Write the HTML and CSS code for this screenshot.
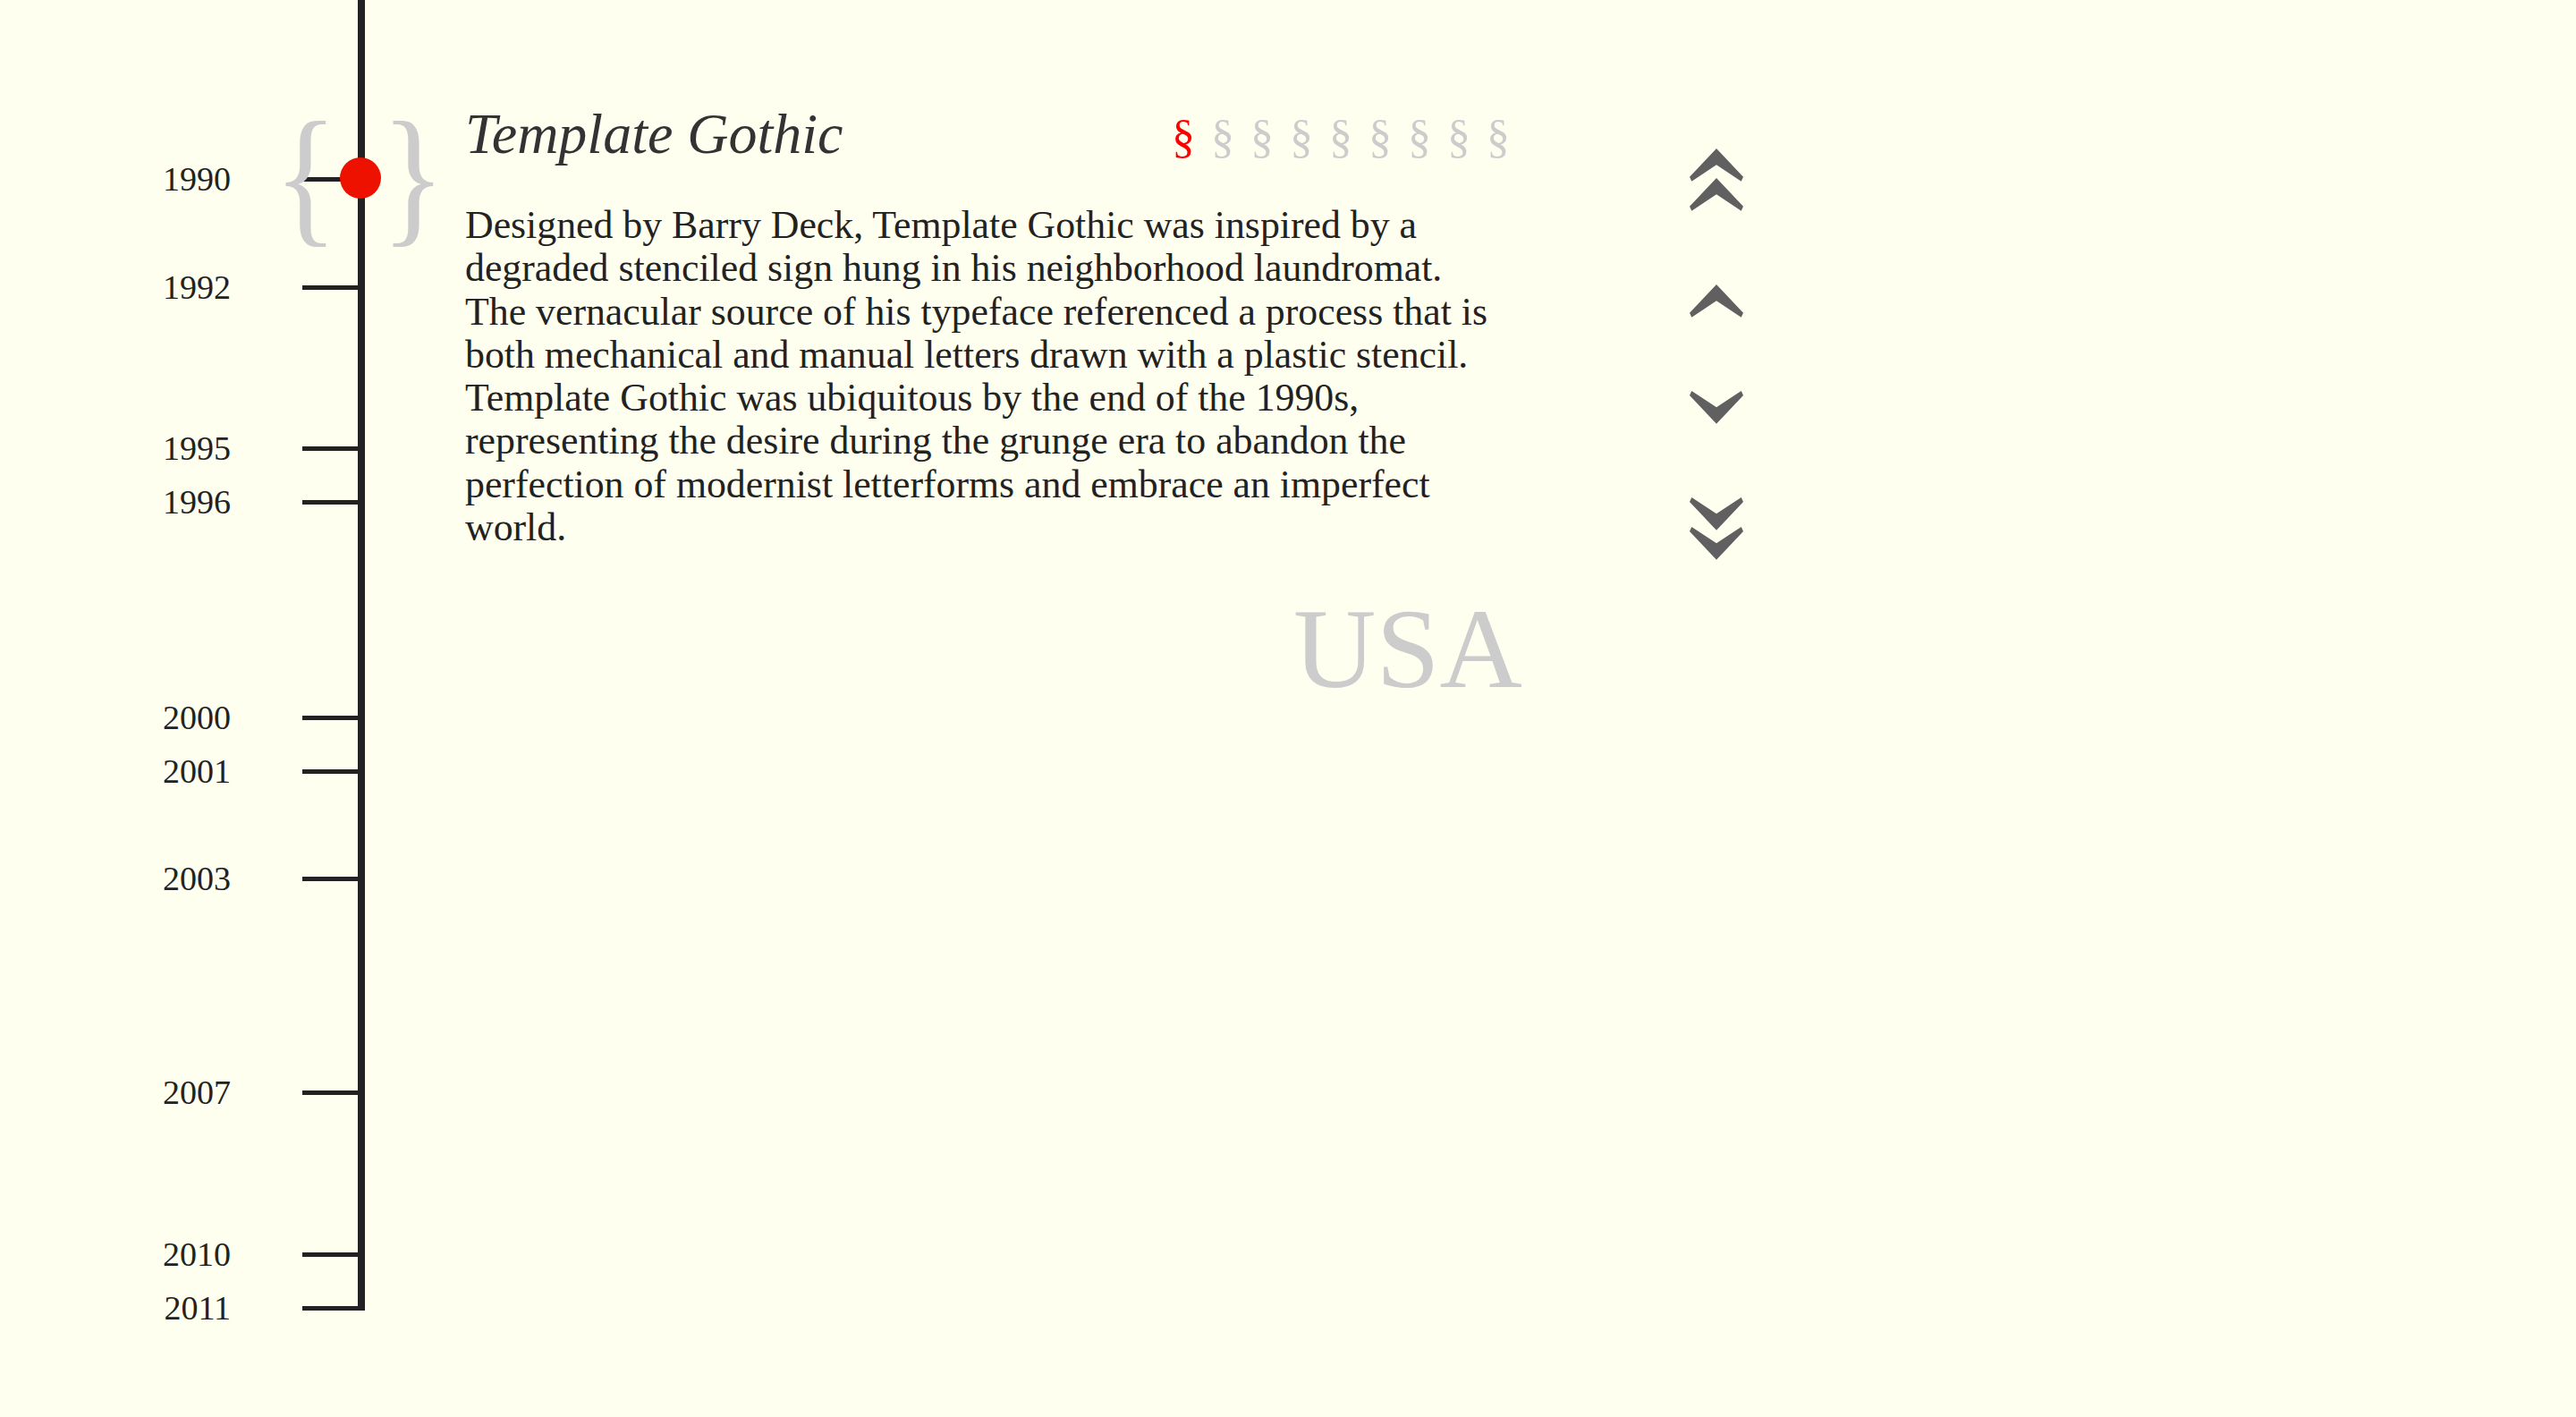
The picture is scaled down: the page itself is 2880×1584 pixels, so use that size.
FILE: index.html
```html
<!DOCTYPE html>
<html lang="en">
<head>
<meta charset="utf-8">
<title>Template Gothic — Timeline</title>
<link rel="stylesheet" href="styles.css">
</head>
<body>
<div class="page">
  <div class="timeline">
    <div class="axis"></div>
    <div class="mark" style="top:180px"><span class="year">1990</span><span class="tick"></span></div>
    <div class="mark" style="top:301px"><span class="year">1992</span><span class="tick"></span></div>
    <div class="mark" style="top:481px"><span class="year">1995</span><span class="tick"></span></div>
    <div class="mark" style="top:541px"><span class="year">1996</span><span class="tick"></span></div>
    <div class="mark" style="top:782px"><span class="year">2000</span><span class="tick"></span></div>
    <div class="mark" style="top:842px"><span class="year">2001</span><span class="tick"></span></div>
    <div class="mark" style="top:962px"><span class="year">2003</span><span class="tick"></span></div>
    <div class="mark" style="top:1201px"><span class="year">2007</span><span class="tick"></span></div>
    <div class="mark" style="top:1382px"><span class="year">2010</span><span class="tick"></span></div>
    <div class="mark" style="top:1442px"><span class="year">2011</span><span class="tick"></span></div>
    <div class="current" style="top:132px">
      <span class="brace">{</span>
      <span class="dot"></span>
      <span class="brace">}</span>
    </div>
  </div>

  <main class="entry">
    <header class="entry-head">
      <h1 class="entry-title">Template Gothic</h1>
      <nav class="sections">
        <span class="sec active">§</span>
        <span class="sec">§</span>
        <span class="sec">§</span>
        <span class="sec">§</span>
        <span class="sec">§</span>
        <span class="sec">§</span>
        <span class="sec">§</span>
        <span class="sec">§</span>
        <span class="sec">§</span>
      </nav>
    </header>
    <p class="entry-text">Designed by Barry Deck, Template Gothic was inspired by a degraded stenciled sign hung in his neighborhood laundromat. The vernacular source of his typeface referenced a process that is both mechanical and manual letters drawn with a plastic stencil. Template Gothic was ubiquitous by the end of the 1990s, representing the desire during the grunge era to abandon the perfection of modernist letterforms and embrace an imperfect world.</p>
    <div class="country">USA</div>
  </main>

  <nav class="pager">
    <a class="pg pg-double">
      <svg viewBox="0 0 60 70" width="60" height="70"><polygon points="30,0 60,31.7 57.7,36.7 30,18.3 2.3,36.7 0,31.7"/><polygon points="30,33 60,64.7 57.7,69.7 30,51.3 2.3,69.7 0,64.7"/></svg>
    </a>
    <a class="pg pg-single">
      <svg viewBox="0 0 60 37" width="60" height="37"><polygon points="30,0 60,31.7 57.7,36.7 30,18.3 2.3,36.7 0,31.7"/></svg>
    </a>
    <a class="pg pg-single">
      <svg viewBox="0 0 60 37" width="60" height="37"><polygon points="2.3,0 30,18.3 57.7,0 60,5 30,36.7 0,5"/></svg>
    </a>
    <a class="pg pg-double">
      <svg viewBox="0 0 60 70" width="60" height="70"><polygon points="2.3,0 30,18.3 57.7,0 60,5 30,36.7 0,5"/><polygon points="2.3,33 30,51.3 57.7,33 60,38 30,69.7 0,38"/></svg>
    </a>
  </nav>
</div>
</body>
</html>
```

FILE: styles.css
```css
html, body {
  margin: 0;
  padding: 0;
  background: #fffff0;
}

body {
  font-family: "Liberation Serif", "Times New Roman", serif;
  color: #222;
}

.page {
  display: flex;
  align-items: flex-start;
  width: 2880px;
  height: 1584px;
}

/* ---------- timeline ---------- */
.timeline {
  position: relative;
  width: 520px;
  height: 1584px;
  flex: none;
}

.axis {
  position: absolute;
  left: 400px;
  top: 0;
  width: 8px;
  height: 1465px;
  background: #222;
}

.mark {
  position: absolute;
  left: 0;
  height: 40px;
  display: flex;
  align-items: center;
}

.year {
  width: 258px;
  text-align: right;
  font-size: 38px;
  line-height: 40px;
  color: #222;
}

.tick {
  margin-left: 80px;
  width: 64px;
  height: 5px;
  background: #222;
}

.current {
  position: absolute;
  left: 319px;
  height: 144px;
  display: flex;
  align-items: flex-start;
  gap: 13px;
}

.brace {
  flex: none;
  width: 48px;
  text-align: center;
  font-size: 170px;
  line-height: 144px;
  color: #cccccc;
  display: block;
  margin-top: -8px;
  transform: translateX(-16px) scaleX(0.88);
}

.dot {
  flex: none;
  width: 46px;
  height: 46px;
  margin-top: 44px;
  border-radius: 50%;
  background: #ee1100;
}

/* ---------- entry ---------- */
.entry {
  width: 1182px;
  flex: none;
  padding-top: 116px;
}

.entry-head {
  display: flex;
  justify-content: space-between;
  align-items: flex-start;
  height: 68px;
}

.entry-title {
  margin: 0;
  font-size: 64px;
  line-height: 68px;
  font-style: italic;
  font-weight: normal;
  color: #333;
}

.sections {
  display: flex;
  gap: 18px;
  margin-right: 14px;
  margin-top: 11px;
}

.sec {
  font-size: 52px;
  line-height: 52px;
  color: #cccccc;
}

.sec.active {
  color: #ff0000;
}

.entry-text {
  margin: 43px 0 0;
  width: 1150px;
  font-size: 43.8px;
  line-height: 48.3px;
  color: #222;
}

.country {
  margin-top: 48px;
  text-align: right;
  font-size: 128px;
  line-height: 128px;
  color: #cccccc;
}

/* ---------- pager ---------- */
.pager {
  margin-left: 187px;
  padding-top: 166px;
  display: flex;
  flex-direction: column;
  align-items: center;
  gap: 82px;
}

.pg {
  display: block;
  line-height: 0;
}

.pg svg {
  display: block;
  fill: #606060;
}
```
